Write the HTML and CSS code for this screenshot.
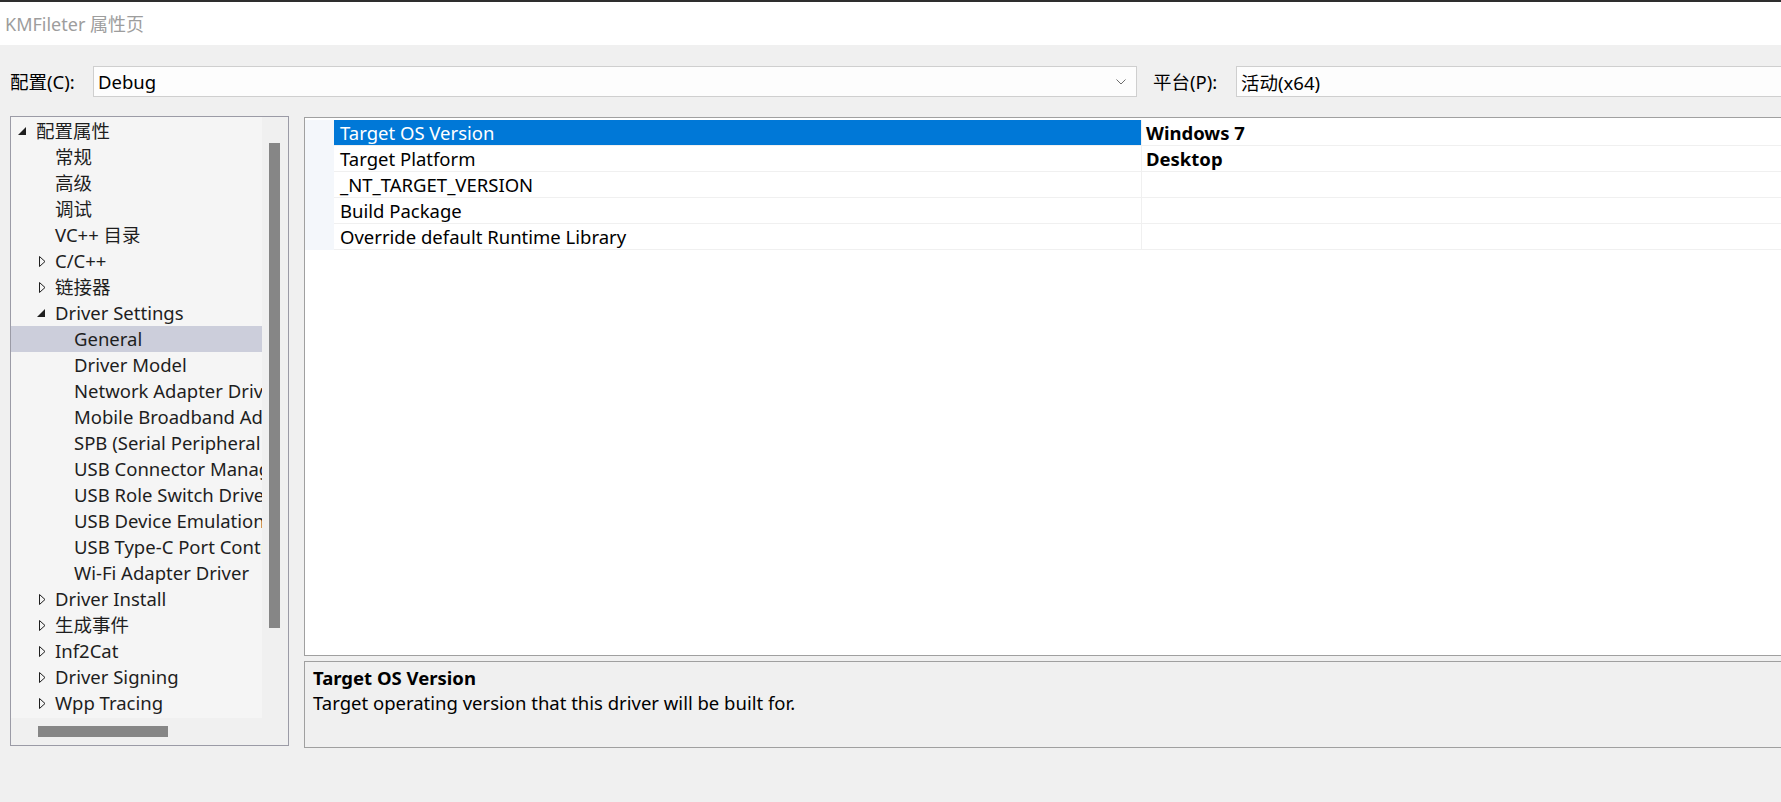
FILE: index.html
```html
<!DOCTYPE html>
<html lang="zh-CN">
<head>
<meta charset="utf-8">
<title>KMFileter 属性页</title>
<link rel="stylesheet" href="styles.css">
</head>
<body>
<div class="window">
  <div class="titlebar"><span class="title">KMFileter 属性页</span></div>

  <div class="config-row">
    <span class="cfg-label">配置(C):</span>
    <div class="combo combo-config">
      <span class="combo-text">Debug</span>
      <svg class="chev" width="10" height="6" viewBox="0 0 10 6"><path d="M0.5 0.5 L5 5 L9.5 0.5" fill="none" stroke="#6d6d6d" stroke-width="1"/></svg>
    </div>
    <span class="cfg-label cfg-label-plat">平台(P):</span>
    <div class="combo combo-platform">
      <span class="combo-text">活动(x64)</span>
    </div>
  </div>

  <div class="main">
    <div class="tree-panel">
      <div class="tree-body">
        <div class="tree-content">
          <div class="node l0"><svg class="exp" width="8" height="8" viewBox="0 0 8 8"><polygon points="0,8 8,8 8,0" fill="#1e1e1e"/></svg><span>配置属性</span></div>
          <div class="node l1"><span>常规</span></div>
          <div class="node l1"><span>高级</span></div>
          <div class="node l1"><span>调试</span></div>
          <div class="node l1"><span>VC++ 目录</span></div>
          <div class="node l1"><svg class="col" width="7" height="11" viewBox="0 0 7 11"><polygon points="0.5,0.5 0.5,10.5 6,5.5" fill="none" stroke="#1e1e1e" stroke-width="1"/></svg><span>C/C++</span></div>
          <div class="node l1"><svg class="col" width="7" height="11" viewBox="0 0 7 11"><polygon points="0.5,0.5 0.5,10.5 6,5.5" fill="none" stroke="#1e1e1e" stroke-width="1"/></svg><span>链接器</span></div>
          <div class="node l1"><svg class="exp" width="8" height="8" viewBox="0 0 8 8"><polygon points="0,8 8,8 8,0" fill="#1e1e1e"/></svg><span>Driver Settings</span></div>
          <div class="node l2 selected"><span>General</span></div>
          <div class="node l2"><span>Driver Model</span></div>
          <div class="node l2"><span>Network Adapter Driver</span></div>
          <div class="node l2"><span>Mobile Broadband Adapter Driver</span></div>
          <div class="node l2"><span>SPB (Serial Peripheral Bus)</span></div>
          <div class="node l2"><span>USB Connector Manager</span></div>
          <div class="node l2"><span>USB Role Switch Driver</span></div>
          <div class="node l2"><span>USB Device Emulation</span></div>
          <div class="node l2"><span>USB Type-C Port Controller</span></div>
          <div class="node l2"><span>Wi-Fi Adapter Driver</span></div>
          <div class="node l1"><svg class="col" width="7" height="11" viewBox="0 0 7 11"><polygon points="0.5,0.5 0.5,10.5 6,5.5" fill="none" stroke="#1e1e1e" stroke-width="1"/></svg><span>Driver Install</span></div>
          <div class="node l1"><svg class="col" width="7" height="11" viewBox="0 0 7 11"><polygon points="0.5,0.5 0.5,10.5 6,5.5" fill="none" stroke="#1e1e1e" stroke-width="1"/></svg><span>生成事件</span></div>
          <div class="node l1"><svg class="col" width="7" height="11" viewBox="0 0 7 11"><polygon points="0.5,0.5 0.5,10.5 6,5.5" fill="none" stroke="#1e1e1e" stroke-width="1"/></svg><span>Inf2Cat</span></div>
          <div class="node l1"><svg class="col" width="7" height="11" viewBox="0 0 7 11"><polygon points="0.5,0.5 0.5,10.5 6,5.5" fill="none" stroke="#1e1e1e" stroke-width="1"/></svg><span>Driver Signing</span></div>
          <div class="node l1"><svg class="col" width="7" height="11" viewBox="0 0 7 11"><polygon points="0.5,0.5 0.5,10.5 6,5.5" fill="none" stroke="#1e1e1e" stroke-width="1"/></svg><span>Wpp Tracing</span></div>
        </div>
        <div class="vscroll"><div class="vthumb"></div></div>
      </div>
      <div class="hscroll"><div class="hthumb"></div></div>
    </div>

    <div class="right">
      <div class="grid">
        <div class="prow selected"><div class="gutter"></div><div class="pname">Target OS Version</div><div class="pval">Windows 7</div></div>
        <div class="prow"><div class="gutter"></div><div class="pname">Target Platform</div><div class="pval">Desktop</div></div>
        <div class="prow"><div class="gutter"></div><div class="pname">_NT_TARGET_VERSION</div><div class="pval"></div></div>
        <div class="prow"><div class="gutter"></div><div class="pname">Build Package</div><div class="pval"></div></div>
        <div class="prow"><div class="gutter"></div><div class="pname">Override default Runtime Library</div><div class="pval"></div></div>
      </div>
      <div class="desc">
        <div class="desc-title">Target OS Version</div>
        <div class="desc-text">Target operating version that this driver will be built for.</div>
      </div>
    </div>
  </div>
</div>
</body>
</html>
```

FILE: styles.css
```css
html, body {
  margin: 0;
  padding: 0;
}
body {
  width: 1781px;
  height: 802px;
  overflow: hidden;
  background: #f0f0f0;
  font-family: "Noto Sans", "Noto Sans CJK SC", sans-serif;
  font-size: 18.5px;
  color: #1e1e1e;
}
.window {
  width: 1781px;
  height: 802px;
  overflow: hidden;
  display: flex;
  flex-direction: column;
}
.titlebar {
  height: 43px;
  border-top: 2px solid #2e2e2e;
  background: #ffffff;
  display: flex;
  align-items: center;
  padding-left: 5px;
  flex: none;
}
.title {
  font-size: 18px;
  color: #9d9d9d;
  line-height: 1;
}
.config-row {
  margin-top: 21px;
  height: 31px;
  display: flex;
  align-items: center;
  padding-left: 10px;
  flex: none;
}
.cfg-label {
  width: 83px;
  flex: none;
  color: #000;
  line-height: 31px;
}
.cfg-label-plat {
  margin-left: 16px;
}
.combo {
  height: 29px;
  border: 1px solid #cfcfcf;
  background: #fdfdfd;
  display: flex;
  align-items: center;
  box-sizing: content-box;
  flex: none;
}
.combo-text {
  padding-left: 4px;
  color: #000;
  flex: 1;
}
.combo-config {
  width: 1042px;
}
.chev {
  margin-right: 10px;
  margin-top: 1px;
}
.combo-platform {
  width: 700px;
}
.main {
  margin-top: 19px;
  display: flex;
  padding-left: 10px;
  gap: 15px;
  align-items: flex-start;
}
.tree-panel {
  width: 277px;
  height: 628px;
  border: 1px solid #9b9ba6;
  display: flex;
  flex-direction: column;
  flex: none;
  background: #f0f0f0;
}
.tree-body {
  display: flex;
  height: 601px;
}
.tree-content {
  width: 251px;
  background: #f5f5f5;
  overflow: hidden;
  flex: none;
  padding-top: 1px;
  box-sizing: border-box;
}
.node {
  height: 26px;
  display: flex;
  align-items: center;
  white-space: nowrap;
  color: #1e1e1e;
  position: relative;
}
.node span {
  line-height: 26px;
}
.node.l0 { padding-left: 25px; }
.node.l1 { padding-left: 44px; }
.node.l2 { padding-left: 63px; }
.node .exp {
  position: absolute;
  top: 9px;
}
.node .col {
  position: absolute;
  top: 8px;
}
.node.l0 .exp { left: 7px; }
.node.l1 .exp { left: 26px; }
.node.l1 .col { left: 28px; }
.node.selected {
  background: #cccedb;
}
.vscroll {
  flex: none;
  width: 26px;
  background: #f0f0f0;
}
.vthumb {
  margin-left: 7px;
  margin-top: 26px;
  width: 11px;
  height: 485px;
  background: #868686;
}
.hscroll {
  height: 27px;
  background: #f0f0f0;
  padding-top: 8px;
  box-sizing: border-box;
}
.hthumb {
  margin-left: 27px;
  width: 130px;
  height: 11px;
  background: #868686;
}
.right {
  margin-top: 1px;
  width: 1500px;
  flex: none;
  display: flex;
  flex-direction: column;
  gap: 5px;
}
.grid {
  height: 535px;
  border: 1px solid #a0a0a0;
  border-right: none;
  background: #ffffff;
  padding-top: 2px;
  box-sizing: content-box;
}
.prow {
  display: flex;
  height: 26px;
  color: #000;
}
.gutter {
  width: 29px;
  flex: none;
  background: #f4f7fb;
}
.pname {
  width: 801px;
  flex: none;
  padding-left: 6px;
  line-height: 25px;
  height: 25px;
  border-bottom: 1px solid #f0f0f0;
  white-space: nowrap;
}
.pval {
  flex: 1;
  border-left: 1px solid #f0f0f0;
  border-bottom: 1px solid #f0f0f0;
  padding-left: 4px;
  line-height: 25px;
  height: 25px;
  font-weight: 700;
}
.prow.selected .pname {
  background: #0078d7;
  color: #ffffff;
}
.desc {
  height: 87px;
  border: 1px solid #a0a0a0;
  border-right: none;
  background: #f0f0f0;
  padding-left: 8px;
  padding-top: 3px;
  box-sizing: border-box;
  color: #000;
}
.desc-title {
  font-weight: 700;
  line-height: 25px;
}
.desc-text {
  line-height: 25px;
}
```
